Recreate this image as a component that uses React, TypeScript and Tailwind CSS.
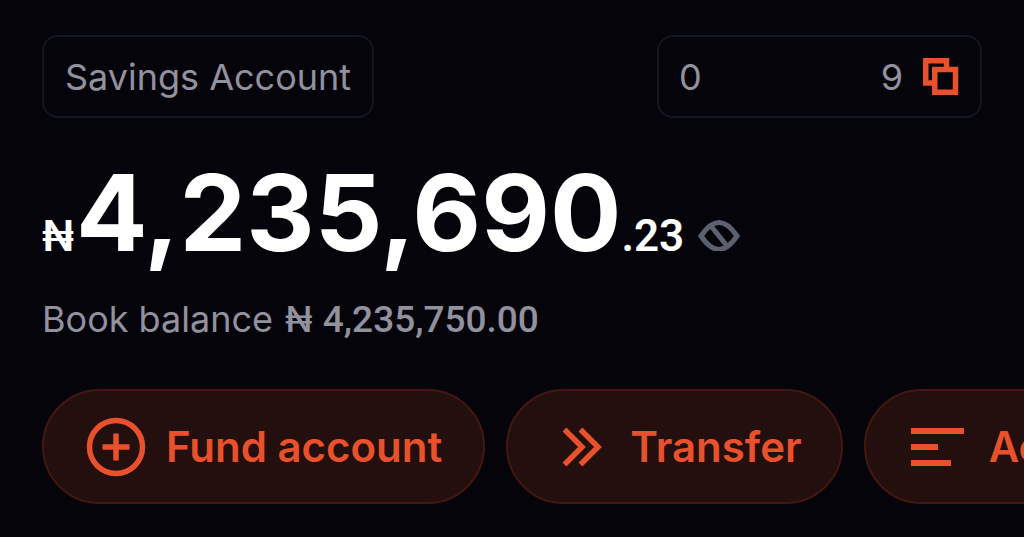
import React from 'react';

interface ActionButtonProps {
  label: string;
  icon: React.ReactNode;
  className: string;
}

const CopyIcon = () => (
  <svg width="36" height="38" viewBox="0 0 36 38" fill="none" stroke="currentColor" strokeWidth="5.5">
    <path d="M11.5 25H2.75V2.75H23.5V11.5" />
    <path d="M11.75 11.5H32.5V34.25H11.75Z" />
  </svg>
);

const HiddenEyeIcon = () => (
  <svg width="42" height="32" viewBox="0 0 42 32" fill="none" stroke="currentColor" strokeWidth="5">
    <path d="M3 17C15 -1 27 -1 39 17C27 35 15 35 3 17Z" />
    <path d="M13 7L29 27" />
  </svg>
);

const PlusCircleIcon = () => (
  <svg width="60" height="60" viewBox="0 0 60 60" fill="none" stroke="currentColor">
    <circle cx="30" cy="30" r="26.5" strokeWidth="5.5" />
    <path d="M30 16.5V43.5M16.5 30H43.5" strokeWidth="5.5" />
  </svg>
);

const TransferIcon = () => (
  <svg width="40" height="40" viewBox="0 0 40 40" fill="none" stroke="currentColor" strokeWidth="5.5">
    <path d="M2.5 2.5L20 20L2.5 37.5M18.5 2.5L36 20L18.5 37.5" />
  </svg>
);

const LinesIcon = () => (
  <svg width="54" height="38" viewBox="0 0 54 38" fill="currentColor">
    <path d="M0 0H53V6H0ZM0 16H27V22H0ZM0 32H40V38H0Z" />
  </svg>
);

const ActionButton: React.FC<ActionButtonProps> = ({ label, icon, className }) => (
  <button
    type="button"
    className={`flex h-[115px] shrink-0 items-center rounded-full border-2 border-[#45170f] bg-[#230f0d] text-[42px] leading-none font-semibold text-[#e8512b] ${className}`}
  >
    {icon}
    <span>{label}</span>
  </button>
);

export default function App() {
  return (
    <main className="min-h-screen overflow-x-hidden bg-[#06040b] pt-[35px] pl-[42px] font-['Inter',sans-serif] text-[#92919e]">
      <header className="flex items-center justify-between pr-[42px] text-[36px] leading-none font-normal">
        <div className="flex h-[83px] items-center rounded-2xl border-2 border-[#111623] px-[21px]">Savings Account</div>
        <div className="flex h-[83px] w-[325px] items-center rounded-2xl border-2 border-[#111623] pr-[21px] pl-5">
          <div className="flex flex-1 justify-between">
            <span>0</span>
            <span>9</span>
          </div>
          <button type="button" aria-label="Copy account number" className="ml-5 text-[#e8512b]">
            <CopyIcon />
          </button>
        </div>
      </header>

      <section className="mt-[41px] flex items-baseline leading-none font-semibold text-white">
        <span className="text-[42px]">₦</span>
        <span className="ml-0.5 text-[106px] leading-[108px] font-bold">4,235,690</span>
        <span className="font-['Roboto',sans-serif] text-[44px]">.23</span>
        <button type="button" aria-label="Hide balance" className="ml-3.5 text-[#5c6170]">
          <HiddenEyeIcon />
        </button>
      </section>

      <p className="mt-[34px] text-[36px] leading-none">
        Book balance <span className="ml-0.5 font-medium">₦</span>{' '}
        <span className="font-['Roboto',sans-serif] text-[37px] font-medium">4,235,750.00</span>
      </p>

      <nav className="mt-[51px] flex gap-[21px]">
        <ActionButton label="Fund account" icon={<PlusCircleIcon />} className="gap-5 pr-[41px] pl-[42px]" />
        <ActionButton label="Transfer" icon={<TransferIcon />} className="gap-7 pr-[39px] pl-[54px]" />
        <ActionButton label="Ac" icon={<LinesIcon />} className="gap-6 px-[45px]" />
      </nav>
    </main>
  );
}
